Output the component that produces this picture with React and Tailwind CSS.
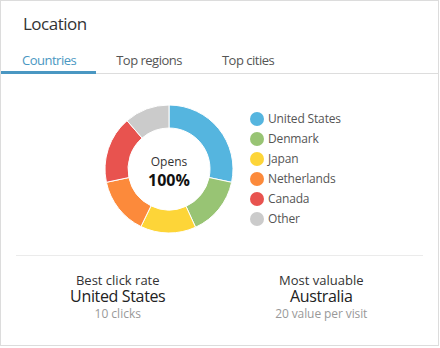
import React from "react"

const slices = [
  { label: "United States", color: "#55b5df", deg: 102 },
  { label: "Denmark", color: "#98c474", deg: 53.5 },
  { label: "Japan", color: "#fdd538", deg: 50.5 },
  { label: "Netherlands", color: "#fc8a3b", deg: 52 },
  { label: "Canada", color: "#e8534f", deg: 61 },
  { label: "Other", color: "#cbcbcb", deg: 41 },
]

function pt(cx, cy, r, deg) {
  const a = ((deg - 90) * Math.PI) / 180
  return [cx + r * Math.cos(a), cy + r * Math.sin(a)]
}

function arc(cx, cy, ro, ri, a0, a1) {
  const large = a1 - a0 > 180 ? 1 : 0
  const [x0, y0] = pt(cx, cy, ro, a0)
  const [x1, y1] = pt(cx, cy, ro, a1)
  const [x2, y2] = pt(cx, cy, ri, a1)
  const [x3, y3] = pt(cx, cy, ri, a0)
  return `M${x0} ${y0} A${ro} ${ro} 0 ${large} 1 ${x1} ${y1} L${x2} ${y2} A${ri} ${ri} 0 ${large} 0 ${x3} ${y3} Z`
}

function Donut() {
  let start = 0
  return (
    <div className="relative w-[130px] h-[130px]">
      <svg width="130" height="130" viewBox="0 0 130 130">
        {slices.map((s) => {
          const d = arc(65, 65, 64, 41, start, start + s.deg)
          start += s.deg
          return <path key={s.label} d={d} fill={s.color} stroke="#fff" strokeWidth="1" />
        })}
      </svg>
      <div className="absolute inset-0 flex flex-col items-center justify-center pt-[6px]">
        <span className="text-[12px] leading-[16px] text-[#333]">Opens</span>
        <span className="text-[16px] leading-[20px] font-bold text-[#111]">100%</span>
      </div>
    </div>
  )
}

export default function App() {
  const tabs = ["Countries", "Top regions", "Top cities"]

  return (
    <div className="w-[440px] h-[348px] bg-white" style={{ fontFamily: '"Open Sans", "Liberation Sans", sans-serif' }}>
      <div className="w-[439px] h-[346px] border border-[#dcdcdc] bg-white flex flex-col">
        {/* cabeçalho */}
        <h2 className="pt-[11px] px-[22px] text-[17px] leading-[24px] tracking-[-0.5px] text-[#333] font-normal">Location</h2>

        <div className="mt-[15px] flex border-b border-[#dddddd]">
          {tabs.map((t, i) => (
            <div
              key={t}
              className={
                i === 0
                  ? "pl-[21px] pr-[20px] pb-[2px] text-[13px] leading-[18px] tracking-[-0.5px] text-[#4a97c2] border-b-[3px] border-[#4a97c2] mb-[-1px]"
                  : "px-[20px] pb-[2px] text-[13px] leading-[18px] tracking-[-0.5px] text-[#555] border-b-[3px] border-transparent mb-[-1px]"
              }
            >
              {t}
            </div>
          ))}
        </div>

        {/* grafico */}
        <div className="mt-[30px] flex items-center pl-[103px] gap-[16px]">
          <Donut />
          <ul className="flex flex-col">
            {slices.map((s) => (
              <li key={s.label} className="flex items-center gap-[4px] h-[20px]">
                <span className="w-[14px] h-[14px] rounded-full" style={{ backgroundColor: s.color }} />
                <span className="text-[12px] tracking-[-0.15px] text-[#555]">{s.label}</span>
              </li>
            ))}
          </ul>
        </div>

        <div className="mx-[15px] mt-[21px] border-t border-[#ebebeb]" />

        {/* resumo */}
        <div className="mx-[15px] grid grid-cols-2 pt-[16px] text-center">
          <div className="flex flex-col">
            <span className="text-[13px] leading-[16px] text-[#333]">Best click rate</span>
            <span className="text-[16px] leading-[17px] tracking-[-0.35px] text-[#222]">United States</span>
            <span className="text-[12px] leading-[18px] text-[#999]">10 clicks</span>
          </div>
          <div className="flex flex-col">
            <span className="text-[13px] leading-[16px] text-[#333]">Most valuable</span>
            <span className="text-[16px] leading-[17px] tracking-[-0.35px] text-[#222]">Australia</span>
            <span className="text-[12px] leading-[18px] tracking-[-0.1px] text-[#999]">20 value per visit</span>
          </div>
        </div>
      </div>
    </div>
  )
}
